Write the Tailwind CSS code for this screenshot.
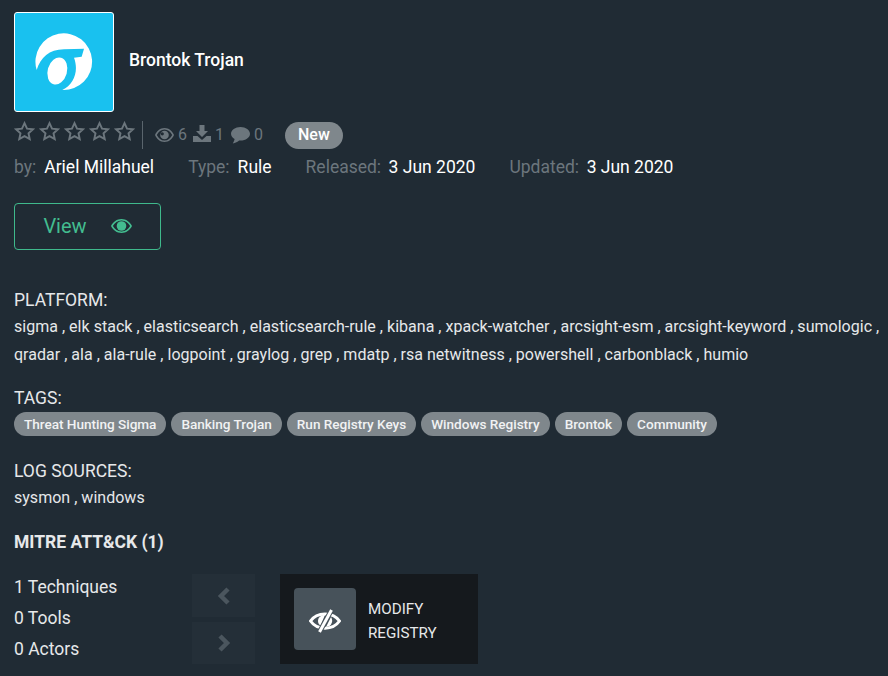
<!DOCTYPE html>
<html lang="en">
<head>
    <meta charset="UTF-8">
    <meta name="viewport" content="width=device-width, initial-scale=1.0">
    <title>Brontok Trojan</title>
    <script src="https://cdn.jsdelivr.net/npm/@tailwindcss/browser@4"></script>
</head>
<body class="bg-[#202b34] font-['Roboto',sans-serif] text-[#e6e8ea] h-[676px] overflow-hidden">
    <div class="pl-[14px] pt-[12px]">
        <!-- header -->
        <div class="flex items-center">
            <div class="w-[100px] h-[100px] bg-[#19c1ef] border border-white rounded-[3px] flex items-center justify-center">
                <svg width="58" height="58" viewBox="108 101 174 174" fill="#fff">
                    <path d="M113 212 A85 85 0 1 1 190 272 C225 255 240 215 225 175 L248 172 L255 148 L195 150 C150 150 125 175 113 212Z"/>
                    <ellipse cx="175" cy="215" rx="29" ry="41" transform="rotate(16 175 215)"/>
                </svg>
            </div>
            <h1 class="ml-[15px] mb-[4px] text-[17.5px] font-medium text-white">Brontok Trojan</h1>
        </div>

        <!-- stats -->
        <div class="flex items-center h-[30px] mt-[8px]">
            <div class="flex gap-[4px] pr-[7px] pb-[7px] h-[28px] items-center border-r border-[#5a656d] text-[#6c767d]">
                <svg width="21" height="21" viewBox="0 0 24 24" fill="none" stroke="currentColor" stroke-width="2.200"><path d="M12 2.500l2.900 6.200 6.700.8-5 4.600 1.400 6.700-6-3.400-6 3.400 1.400-6.700-5-4.600 6.700-.8z"/></svg>
                <svg width="21" height="21" viewBox="0 0 24 24" fill="none" stroke="currentColor" stroke-width="2.200"><path d="M12 2.500l2.900 6.200 6.700.8-5 4.600 1.400 6.700-6-3.400-6 3.400 1.400-6.700-5-4.600 6.700-.8z"/></svg>
                <svg width="21" height="21" viewBox="0 0 24 24" fill="none" stroke="currentColor" stroke-width="2.200"><path d="M12 2.500l2.900 6.200 6.700.8-5 4.600 1.400 6.700-6-3.400-6 3.400 1.400-6.700-5-4.600 6.700-.8z"/></svg>
                <svg width="21" height="21" viewBox="0 0 24 24" fill="none" stroke="currentColor" stroke-width="2.200"><path d="M12 2.500l2.900 6.200 6.700.8-5 4.600 1.400 6.700-6-3.400-6 3.400 1.400-6.700-5-4.600 6.700-.8z"/></svg>
                <svg width="21" height="21" viewBox="0 0 24 24" fill="none" stroke="currentColor" stroke-width="2.200"><path d="M12 2.500l2.900 6.200 6.700.8-5 4.600 1.400 6.700-6-3.400-6 3.400 1.400-6.700-5-4.600 6.700-.8z"/></svg>
            </div>
            <div class="flex items-center ml-[12px] text-[#6c767d] text-[16px]">
                <svg width="19" height="14" viewBox="0 0 19 14" fill="currentColor"><path fill-rule="evenodd" d="M9.500 0C5.200 0 1.800 2.800 0 7c1.800 4.200 5.200 7 9.500 7s7.700-2.800 9.500-7c-1.800-4.200-5.200-7-9.500-7zm0 1.400c3.400 0 6 2.200 7.700 5.600-1.700 3.400-4.300 5.600-7.700 5.600S3.500 10.400 1.800 7C3.500 3.600 6.100 1.400 9.500 1.400z"/><path fill-rule="evenodd" d="M9.500 2.700a4.300 4.300 0 1 0 0 8.600 4.300 4.300 0 0 0 0-8.600zM7.300 4.200a1.600 1.600 0 1 1 0 3.200 1.600 1.600 0 0 1 0-3.200z"/></svg>
                <span class="ml-[4px]">6</span>
                <svg class="ml-[6px] mb-[3px]" width="18" height="17" viewBox="0 0 18 17" fill="currentColor"><path d="M6.500 0h5v6h3.500L9 12 3 6h3.500z"/><path d="M0 11h4.500L9 15l4.500-4H18v6H0z"/></svg>
                <span class="ml-[4px]">1</span>
                <svg class="ml-[7px]" width="19" height="17" viewBox="0 0 19 17" fill="currentColor"><path d="M9.500 0C4.300 0 0 3 0 6.800c0 2.200 1.400 4.100 3.600 5.300C3.300 14 2.400 15.500 1.800 16.500c2.500-.3 5-1.700 6.300-3 .5 0 .9.100 1.400.100 5.200 0 9.500-3 9.500-6.800S14.700 0 9.500 0z"/></svg>
                <span class="ml-[4px]">0</span>
            </div>
            <span class="ml-[22px] h-[27px] px-[13px] flex items-center rounded-full bg-[#7f878c] text-white text-[16px] font-medium">New</span>
        </div>

        <!-- meta -->
        <div class="flex items-center h-[24px] mt-[5px] text-[17.5px]">
            <span class="text-[#6c767d]">by:</span><span class="ml-[8px] text-white">Ariel Millahuel</span>
            <span class="ml-[34px] text-[#6c767d]">Type:</span><span class="ml-[8px] text-white">Rule</span>
            <span class="ml-[34px] text-[#6c767d]">Released:</span><span class="ml-[7.5px] text-white">3 Jun 2020</span>
            <span class="ml-[34px] text-[#6c767d]">Updated:</span><span class="ml-[7.5px] text-white">3 Jun 2020</span>
        </div>

        <!-- view -->
        <button class="mt-[24px] w-[147px] h-[47px] pb-[1px] border border-[#3fb98c] rounded-[4px] flex items-center justify-center text-[#43bd90] text-[20px]">
            View
            <svg class="ml-[24px]" width="21" height="14" viewBox="0 0 21 14" fill="currentColor"><path fill-rule="evenodd" d="M10.500 0C6 0 2 2.800 0 7c2 4.200 6 7 10.500 7S19 11.200 21 7c-2-4.200-6-7-10.500-7zm0 1.600c3.700 0 6.700 2.100 8.600 5.400-1.900 3.300-4.900 5.400-8.600 5.400S3.800 10.300 1.900 7c1.900-3.300 4.900-5.400 8.600-5.400z"/><circle cx="10.500" cy="7" r="4.800"/></svg>
        </button>

        <!-- platform -->
        <div class="mt-[38px] text-[17.5px] leading-[24px]">PLATFORM:</div>
        <div class="w-[874px] mt-[1px] text-[16px] tracking-[0.02px] leading-[28px]">sigma , elk stack , elasticsearch , elasticsearch-rule , kibana , xpack-watcher , arcsight-esm , arcsight-keyword , sumologic , qradar , ala , ala-rule , logpoint , graylog , grep , mdatp , rsa netwitness , powershell , carbonblack , humio</div>

        <!-- tags -->
        <div class="mt-[17px] text-[17.5px] leading-[24px]">TAGS:</div>
        <div class="flex gap-[5px] mt-[2px] tracking-[-0.03px]">
            <span class="h-[24px] px-[10px] flex items-center rounded-full bg-[#7f878c] text-[#f1f2f3] text-[13.6px] font-medium">Threat Hunting Sigma</span>
            <span class="h-[24px] px-[10px] flex items-center rounded-full bg-[#7f878c] text-[#f1f2f3] text-[13.6px] font-medium">Banking Trojan</span>
            <span class="h-[24px] px-[10px] flex items-center rounded-full bg-[#7f878c] text-[#f1f2f3] text-[13.6px] font-medium">Run Registry Keys</span>
            <span class="h-[24px] px-[10px] flex items-center rounded-full bg-[#7f878c] text-[#f1f2f3] text-[13.6px] font-medium">Windows Registry</span>
            <span class="h-[24px] px-[10px] flex items-center rounded-full bg-[#7f878c] text-[#f1f2f3] text-[13.6px] font-medium">Brontok</span>
            <span class="h-[24px] px-[10px] flex items-center rounded-full bg-[#7f878c] text-[#f1f2f3] text-[13.6px] font-medium">Community</span>
        </div>

        <!-- log sources -->
        <div class="mt-[23px] text-[17.5px] leading-[24px]">LOG SOURCES:</div>
        <div class="mt-[1px] text-[16px] tracking-[0.02px] leading-[28px]">sysmon , windows</div>

        <!-- mitre -->
        <div class="mt-[18px] text-[17.5px] leading-[24px] font-bold">MITRE ATT&amp;CK (1)</div>

        <div class="flex mt-[20px]">
            <div class="w-[178px] text-[17.5px] leading-[31px] -mt-[2px]">
                <div>1 Techniques</div>
                <div>0 Tools</div>
                <div>0 Actors</div>
            </div>
            <div class="flex flex-col gap-[5px] w-[63px]">
                <div class="h-[43px] bg-[#242f38] flex items-center justify-center text-[#4b565e]">
                    <svg width="14" height="18" viewBox="0 0 14 18" fill="none" stroke="currentColor" stroke-width="4.500"><path d="M11 2L4 9l7 7"/></svg>
                </div>
                <div class="h-[42px] bg-[#242f38] flex items-center justify-center text-[#4b565e]">
                    <svg width="14" height="18" viewBox="0 0 14 18" fill="none" stroke="currentColor" stroke-width="4.500"><path d="M3 2l7 7-7 7"/></svg>
                </div>
            </div>
            <div class="ml-[25px] w-[198px] h-[90px] bg-[#15191d] flex items-center pl-[14px]">
                <div class="w-[62px] h-[62px] rounded-[4px] bg-[#47525a] flex items-center justify-center">
                    <svg class="mt-[3px]" width="32" height="24" viewBox="0 0 32 24" fill="#fff">
                        <path d="M1.500 12C8 2.500 24 2.500 30.500 12 24 21.500 8 21.500 1.500 12Z" fill="none" stroke="#fff" stroke-width="3"/>
                        <path d="M9 12C9 8.500 12 6 16 6L11.500 16.500C10 15.500 9 14 9 12Z"/>
                        <path d="M22 8C24 11 23.500 15 20 17L17 18Z"/>
                        <path d="M23 0L10 24" stroke="#47525a" stroke-width="5"/>
                        <path d="M22.500 1L10.500 23" stroke="#fff" stroke-width="3"/>
                    </svg>
                </div>
                <div class="ml-[12px] pt-[4px] text-[15.2px] leading-[24px] text-[#e6e8ea]">MODIFY<br>REGISTRY</div>
            </div>
        </div>
    </div>
</body>
</html>
